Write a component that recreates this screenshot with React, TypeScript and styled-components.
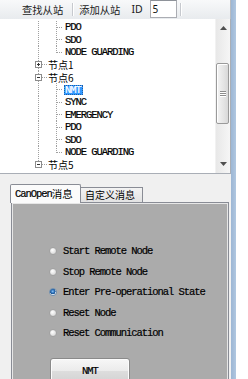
import React from "react";
import styled, { createGlobalStyle, css } from "styled-components";

const MONO = `"Liberation Mono", "DejaVu Sans Mono", monospace`;
const CJK = `"Noto Sans CJK SC", "Noto Sans", sans-serif`;

const GlobalStyle = createGlobalStyle`
  html, body { margin: 0; padding: 0; background: #ffffff; }
  body { width: 248px; height: 379px; overflow: hidden; }
  * { box-sizing: border-box; }
`;

const Screen = styled.div`
  display: flex;
  width: 248px;
  height: 379px;
  background: #ffffff;
  overflow: hidden;
`;

const Window = styled.div`
  width: 231px;
  height: 379px;
  flex: none;
  display: flex;
  flex-direction: column;
  background: #f0f0f0;
  overflow: hidden;
`;

const Frame = styled.div`
  width: 5px;
  height: 100%;
  flex: none;
  background: linear-gradient(90deg, #9cb6d4, #b0c7e0);
`;

/* ---------- toolbar ---------- */
const Toolbar = styled.div`
  height: 19px;
  flex: none;
  display: flex;
  align-items: center;
  padding-left: 22px;
  background: linear-gradient(#f8f9fa, #e8ebee);
  border-right: 1px solid #b8bcc2;
`;

const ToolText = styled.span`
  font-family: ${CJK};
  font-size: 10.3px;
  line-height: 19px;
  color: #1b1b1b;
  white-space: nowrap;
`;

const ToolSep = styled.span<{ $left: number; $right: number }>`
  width: 1px;
  height: 13px;
  background: #c6c9ce;
  box-shadow: 1px 0 0 #ffffff;
  margin: 0 ${(p) => p.$right}px 0 ${(p) => p.$left}px;
`;

const IdLabel = styled.span`
  margin-left: 11px;
  font-family: "Noto Sans", sans-serif;
  font-size: 10.5px;
  line-height: 19px;
  color: #1b1b1b;
`;

const IdInput = styled.div`
  margin-left: 7px;
  align-self: flex-start;
  width: 27px;
  height: 18px;
  background: #ffffff;
  border: 1px solid #abadb3;
  border-top-color: #8e9299;
  padding-left: 2px;
  font-family: "Noto Sans", sans-serif;
  font-size: 10px;
  line-height: 16px;
  color: #111;
`;

/* ---------- tree ---------- */
const TreePanel = styled.div`
  height: 155px;
  flex: none;
  display: flex;
  background: #ffffff;
  border-right: 1px solid #a9aeb6;
  border-bottom: 1px solid #a9aeb6;
`;

const TreeBody = styled.div`
  flex: 1;
  padding-top: 2px;
  overflow: hidden;
`;

const TreeRow = styled.div<{ $tall: boolean }>`
  height: ${(p) => (p.$tall ? 13 : 12)}px;
  display: flex;
  align-items: center;
`;

const LeafLabel = styled.span<{ $selected?: boolean }>`
  font-family: ${MONO};
  font-size: 10.5px;
  letter-spacing: -1.05px;
  line-height: 10px;
  height: 10px;
  padding: 0 2px 0 1px;
  color: #000;
  -webkit-text-stroke: 0.2px #000;
  white-space: nowrap;
  ${(p) =>
    p.$selected &&
    css`
      background: #3399ff;
      color: #ffffff;
      -webkit-text-stroke: 0.2px #ffffff;
      outline: 1px dotted #1d5ea6;
      outline-offset: -1px;
    `}
`;

const NodeLabel = styled.span`
  margin-left: 1px;
  font-family: ${CJK};
  font-size: 10px;
  line-height: 11px;
  height: 11px;
  color: #000;
  white-space: nowrap;
`;

const Svg = styled.svg`
  display: block;
  flex: none;
`;

const dot = {
  stroke: "#a0a0a0",
  strokeWidth: 1,
  strokeDasharray: "1 1",
  shapeRendering: "crispEdges" as const,
};

type RowData = {
  level: 1 | 2;
  text: string;
  exp?: "+" | "-";
  last?: boolean;
  selected?: boolean;
};

function Connector({ row, h }: { row: RowData; h: number }) {
  const cy = 6.5;
  if (row.level === 1) {
    return (
      <Svg width={47} height={h}>
        <line x1={38.5} y1={0} x2={38.5} y2={3} {...dot} />
        {!row.last && <line x1={38.5} y1={10} x2={38.5} y2={h} {...dot} />}
        <line x1={42} y1={cy} x2={47} y2={cy} {...dot} />
        <rect x={35.5} y={3.5} width={6} height={6} fill="#ffffff" stroke="#8c8c8c" shapeRendering="crispEdges" />
        <line x1={37} y1={cy} x2={40} y2={cy} stroke="#333" shapeRendering="crispEdges" />
        {row.exp === "+" && <line x1={38.5} y1={5} x2={38.5} y2={8} stroke="#333" shapeRendering="crispEdges" />}
        {row.exp === "-" && <line x1={56.5} y1={11} x2={56.5} y2={h} {...dot} />}
      </Svg>
    );
  }
  return (
    <Svg width={64} height={h}>
      <line x1={38.5} y1={0} x2={38.5} y2={h} {...dot} />
      <line x1={56.5} y1={0} x2={56.5} y2={row.last ? 7 : h} {...dot} />
      <line x1={57} y1={cy} x2={63} y2={cy} {...dot} />
    </Svg>
  );
}

const rows: RowData[] = [
  { level: 2, text: "PDO" },
  { level: 2, text: "SDO" },
  { level: 2, text: "NODE GUARDING", last: true },
  { level: 1, text: "节点1", exp: "+" },
  { level: 1, text: "节点6", exp: "-" },
  { level: 2, text: "NMT", selected: true },
  { level: 2, text: "SYNC" },
  { level: 2, text: "EMERGENCY" },
  { level: 2, text: "PDO" },
  { level: 2, text: "SDO" },
  { level: 2, text: "NODE GUARDING", last: true },
  { level: 1, text: "节点5", exp: "-", last: true },
];

/* ---------- scrollbar ---------- */
const ScrollBar = styled.div`
  width: 15px;
  flex: none;
  display: flex;
  flex-direction: column;
  background: linear-gradient(90deg, #e8e8e8, #f6f6f6);
  border-left: 1px solid #f2f2f2;
`;

const ArrowBtn = styled.div`
  height: 18px;
  flex: none;
  display: flex;
  align-items: center;
  justify-content: center;
`;

const Track = styled.div`
  flex: 1;
  padding-top: 26px;
`;

const Thumb = styled.div`
  height: 61px;
  margin: 0 1px 0 0;
  border: 1px solid #9a9a9a;
  border-radius: 2px;
  background: linear-gradient(90deg, #f4f4f4, #e4e4e4 60%, #d8d8d8);
  box-shadow: inset 1px 1px 0 #ffffff;
  display: flex;
  flex-direction: column;
  align-items: center;
  justify-content: center;
  gap: 1px;
`;

const Grip = styled.span`
  width: 6px;
  height: 1px;
  background: #8c8c8c;
  box-shadow: 0 1px 0 #ffffff;
`;

/* ---------- tabs ---------- */
const TabSection = styled.div`
  flex: 1;
  display: flex;
  flex-direction: column;
  padding: 10px 1px 0 10px;
`;

const TabStrip = styled.div`
  height: 18px;
  flex: none;
  display: flex;
  align-items: flex-end;
  position: relative;
  z-index: 1;
`;

const Tab = styled.div<{ $active?: boolean }>`
  display: flex;
  align-items: center;
  padding-left: 4px;
  border: 1px solid #898c95;
  border-bottom: none;
  white-space: nowrap;
  ${(p) =>
    p.$active
      ? css`
          width: 71px;
          height: 19px;
          margin-bottom: -1px;
          background: #fbfbfb;
          border-radius: 2px 2px 0 0;
        `
      : css`
          width: 62px;
          height: 15px;
          background: linear-gradient(#f3f3f3, #e2e2e2);
          border-left: none;
        `}
`;

const TabMono = styled.span`
  font-family: ${MONO};
  font-size: 10.5px;
  letter-spacing: -1.05px;
  line-height: 12px;
  color: #000;
  -webkit-text-stroke: 0.2px #000;
`;

const TabCjk = styled.span<{ $size: number }>`
  font-family: ${CJK};
  font-size: ${(p) => p.$size}px;
  line-height: 12px;
  color: #000;
`;

const TabPage = styled.div`
  flex: 1;
  margin: 0 1px;
  background: #ababab;
  border: 1px solid #898c95;
  box-shadow: inset 1px 1px 0 #e6e6e6, inset -1px 0 0 #e6e6e6;
  padding: 38px 0 0 37px;
  display: flex;
  flex-direction: column;
`;

const RadioRow = styled.label`
  height: 20.5px;
  display: flex;
  align-items: center;
  gap: 6px;
`;

const RadioDot = styled.span<{ $checked: boolean }>`
  width: 8px;
  height: 8px;
  flex: none;
  border-radius: 50%;
  border: 1px solid #a2a2a2;
  background: radial-gradient(circle at 40% 35%, #ffffff 0, #e6e6e6 50%, #cfcfcf 100%);
  ${(p) =>
    p.$checked &&
    css`
      border-color: #6f8fb0;
      background: radial-gradient(circle at 45% 40%, #8cc3f5 0, #2a6fb8 35%, #1a4f8c 55%, #e8eef4 62%, #f6f6f6 100%);
    `}
`;

const RadioText = styled.span`
  font-family: ${MONO};
  font-size: 10.5px;
  letter-spacing: -1.05px;
  line-height: 12px;
  color: #000;
  -webkit-text-stroke: 0.2px #000;
  white-space: nowrap;
`;

const NmtButton = styled.div`
  margin: 14px 0 0 1px;
  width: 80px;
  height: 26px;
  flex: none;
  border: 1px solid #8a8a8a;
  border-radius: 3px;
  background: linear-gradient(#f7f7f7, #ebebeb 50%, #dddddd 51%, #d2d2d2);
  box-shadow: inset 0 0 0 1px #fcfcfc;
  display: flex;
  align-items: center;
  justify-content: center;
  font-family: ${MONO};
  font-size: 10.5px;
  letter-spacing: -1.05px;
  color: #000;
  -webkit-text-stroke: 0.2px #000;
`;

const radios = [
  "Start Remote Node",
  "Stop Remote Node",
  "Enter Pre-operational State",
  "Reset Node",
  "Reset Communication",
];

export default function App() {
  return (
    <>
      <GlobalStyle />
      <Screen>
        <Window>
          <Toolbar>
            <ToolText>查找从站</ToolText>
            <ToolSep $left={9} $right={6} />
            <ToolText>添加从站</ToolText>
            <IdLabel>ID</IdLabel>
            <IdInput>5</IdInput>
            <ToolSep $left={3} $right={0} />
          </Toolbar>
          <TreePanel>
            <TreeBody>
              {rows.map((r, i) => {
                const tall = i % 2 === 1;
                return (
                  <TreeRow key={i} $tall={tall}>
                    <Connector row={r} h={tall ? 13 : 12} />
                    {r.level === 1 ? (
                      <NodeLabel>{r.text}</NodeLabel>
                    ) : (
                      <LeafLabel $selected={r.selected}>{r.text}</LeafLabel>
                    )}
                  </TreeRow>
                );
              })}
            </TreeBody>
            <ScrollBar>
              <ArrowBtn>
                <svg width={7} height={4}>
                  <polygon points="0,4 3.5,0 7,4" fill="#505050" />
                </svg>
              </ArrowBtn>
              <Track>
                <Thumb>
                  <Grip />
                  <Grip />
                  <Grip />
                </Thumb>
              </Track>
              <ArrowBtn>
                <svg width={7} height={4}>
                  <polygon points="0,0 7,0 3.5,4" fill="#505050" />
                </svg>
              </ArrowBtn>
            </ScrollBar>
          </TreePanel>
          <TabSection>
            <TabStrip>
              <Tab $active>
                <TabMono>CanOpen</TabMono>
                <TabCjk $size={10.5}>消息</TabCjk>
              </Tab>
              <Tab>
                <TabCjk $size={10}>自定义消息</TabCjk>
              </Tab>
            </TabStrip>
            <TabPage>
              {radios.map((t, i) => (
                <RadioRow key={t}>
                  <RadioDot $checked={i === 2} />
                  <RadioText>{t}</RadioText>
                </RadioRow>
              ))}
              <NmtButton>NMT</NmtButton>
            </TabPage>
          </TabSection>
        </Window>
        <Frame />
      </Screen>
    </>
  );
}
